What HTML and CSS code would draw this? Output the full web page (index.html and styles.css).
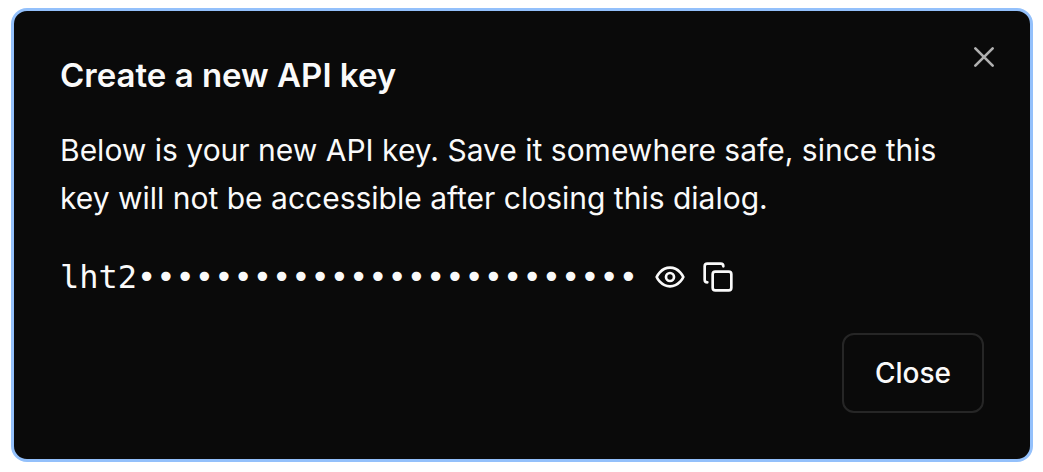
FILE: index.html
```html
<!DOCTYPE html>
<html lang="en">
<head>
<meta charset="utf-8">
<meta name="viewport" content="width=device-width, initial-scale=1">
<title>Create a new API key</title>
<link rel="stylesheet" href="styles.css">
</head>
<body>
<main class="dialog" role="dialog" aria-labelledby="dialog-title" aria-describedby="dialog-text">
  <header class="dialog-header">
    <h1 class="dialog-title" id="dialog-title">Create a new API key</h1>
    <button class="icon-button dismiss" type="button" aria-label="Dismiss">
      <svg width="32" height="32" viewBox="0 0 24 24"><path d="M18.5 5.5l-13 13M5.5 5.5l13 13"/></svg>
    </button>
  </header>
  <p class="dialog-text" id="dialog-text">Below is your new API key. Save it somewhere safe, since this key will not be accessible after closing this dialog.</p>
  <div class="key-row">
    <code class="key">lht2••••••••••••••••••••••••••</code>
    <button class="icon-button" type="button" aria-label="Show key">
      <svg width="32" height="32" viewBox="0 0 24 24"><path d="M2 12s3-7 10-7 10 7 10 7-3 7-10 7-10-7-10-7Z"/><circle cx="12" cy="12" r="3"/></svg>
    </button>
    <button class="icon-button" type="button" aria-label="Copy key">
      <svg width="32" height="32" viewBox="0 0 24 24"><rect x="8" y="8" width="14" height="14" rx="2"/><path d="M4 16c-1.1 0-2-.9-2-2V4c0-1.1.9-2 2-2h10c1.1 0 2 .9 2 2"/></svg>
    </button>
  </div>
  <footer class="dialog-footer">
    <button class="close-button" type="button">Close</button>
  </footer>
</main>
</body>
</html>
```
FILE: styles.css
```css
* {
  box-sizing: border-box;
}

body {
  margin: 0;
  padding: 8px 10px 10px 11px;
  background: #fff;
  color: #fafafa;
  font-family: Inter, "Liberation Sans", sans-serif;
}

.dialog {
  padding: 44px 46px;
  border: 3px solid #93c0fb;
  border-radius: 16px;
  background: #0a0a0a;
}

.dialog-header {
  display: flex;
  align-items: flex-start;
  justify-content: space-between;
}

.dialog-title {
  margin: 0;
  font-size: 33px;
  font-weight: 600;
  line-height: 40px;
}

.dialog-text {
  margin: 31px 0 0;
  font-size: 30px;
  line-height: 48px;
}

.icon-button {
  display: flex;
  padding: 0;
  border: 0;
  background: none;
  color: inherit;
  cursor: pointer;
}

.icon-button svg {
  fill: none;
  stroke: currentColor;
  stroke-width: 2;
  stroke-linecap: round;
  stroke-linejoin: round;
}

.dismiss {
  margin: -14px -16px 0 0;
  color: #b0b0b0;
}

.key-row {
  display: flex;
  align-items: center;
  gap: 16px;
  margin-top: 31px;
}

.key {
  font-family: "DejaVu Sans Mono", monospace;
  font-size: 32px;
  line-height: 48px;
}

.dialog-footer {
  display: flex;
  justify-content: flex-end;
  margin: 32px 0 2px;
}

.close-button {
  padding: 18px 31px;
  border: 2px solid #262626;
  border-radius: 12px;
  background: #0a0a0a;
  color: inherit;
  font: 500 28px/40px Inter, "Liberation Sans", sans-serif;
  cursor: pointer;
}
```
